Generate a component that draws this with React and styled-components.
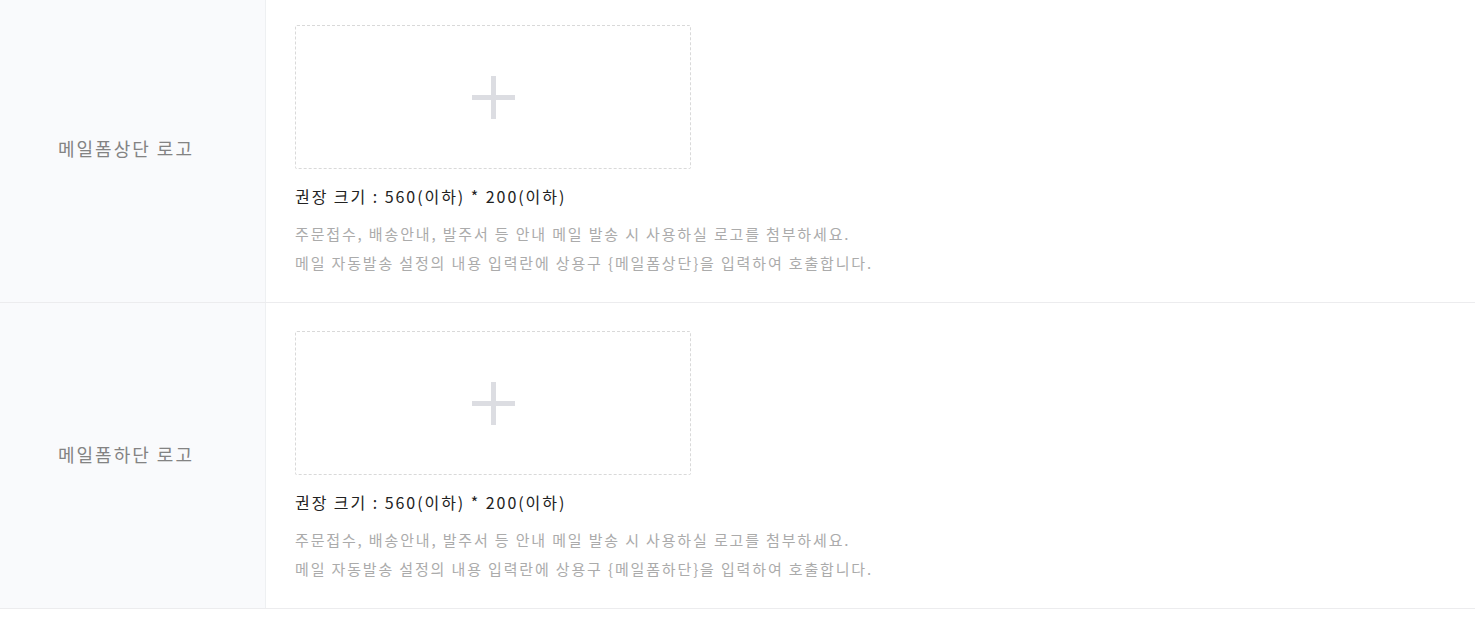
import React from "react";
import styled, { createGlobalStyle } from "styled-components";

const GlobalStyle = createGlobalStyle`
  html, body {
    margin: 0;
    padding: 0;
    background: #fff;
  }
  body {
    font-family: "Noto Sans CJK KR", "Noto Sans", sans-serif;
  }
`;

const rows = [
  { label: "메일폼상단 로고", code: "메일폼상단" },
  { label: "메일폼하단 로고", code: "메일폼하단" },
];

const App = () => {
  return (
    <>
      <GlobalStyle />
      <Table>
        {rows.map((row) => (
          <Row key={row.code}>
            <Label>{row.label}</Label>
            <Cell>
              <UploadBox type="button" aria-label="이미지 추가">
                <Plus />
              </UploadBox>
              <SizeText>권장 크기 : 560(이하) * 200(이하)</SizeText>
              <Help>
                주문접수, 배송안내, 발주서 등 안내 메일 발송 시 사용하실 로고를 첨부하세요.
                <br />
                메일 자동발송 설정의 내용 입력란에 상용구 {"{"}
                {row.code}
                {"}"}을 입력하여 호출합니다.
              </Help>
            </Cell>
          </Row>
        ))}
      </Table>
    </>
  );
};

export default App;

const Table = styled.div`
  margin-top: -3px;
  width: 1475px;
`;

const Row = styled.div`
  display: grid;
  grid-template-columns: 266px 1fr;
  height: 305px;
  border-bottom: 1px solid #ececee;
`;

const Label = styled.div`
  display: flex;
  align-items: center;
  padding: 0 0 4px 58px;
  background: #f9fafc;
  border-right: 1px solid #eef0f2;
  color: #838383;
  font-size: 18px;
  letter-spacing: 2px;
`;

const Cell = styled.div`
  padding: 28px 0 0 29px;
`;

const UploadBox = styled.button`
  display: flex;
  align-items: center;
  justify-content: center;
  width: 396px;
  height: 144px;
  padding: 0;
  background: #fff;
  border: 1px dashed #d9d9d9;
  border-radius: 2px;
  cursor: pointer;
`;

const Plus = styled.span`
  position: relative;
  width: 43px;
  height: 43px;
  &::before,
  &::after {
    content: "";
    position: absolute;
    background: #dcdde2;
  }
  &::before {
    left: 19px;
    top: 0;
    width: 5px;
    height: 43px;
  }
  &::after {
    top: 19px;
    left: 0;
    width: 43px;
    height: 5px;
  }
`;

const SizeText = styled.p`
  margin: 16px 0 0;
  color: #222;
  font-size: 16px;
  line-height: 22px;
  letter-spacing: 1.95px;
`;

const Help = styled.p`
  margin: 12px 0 0;
  color: #ababab;
  font-size: 15px;
  line-height: 29px;
  letter-spacing: 1.85px;
`;
